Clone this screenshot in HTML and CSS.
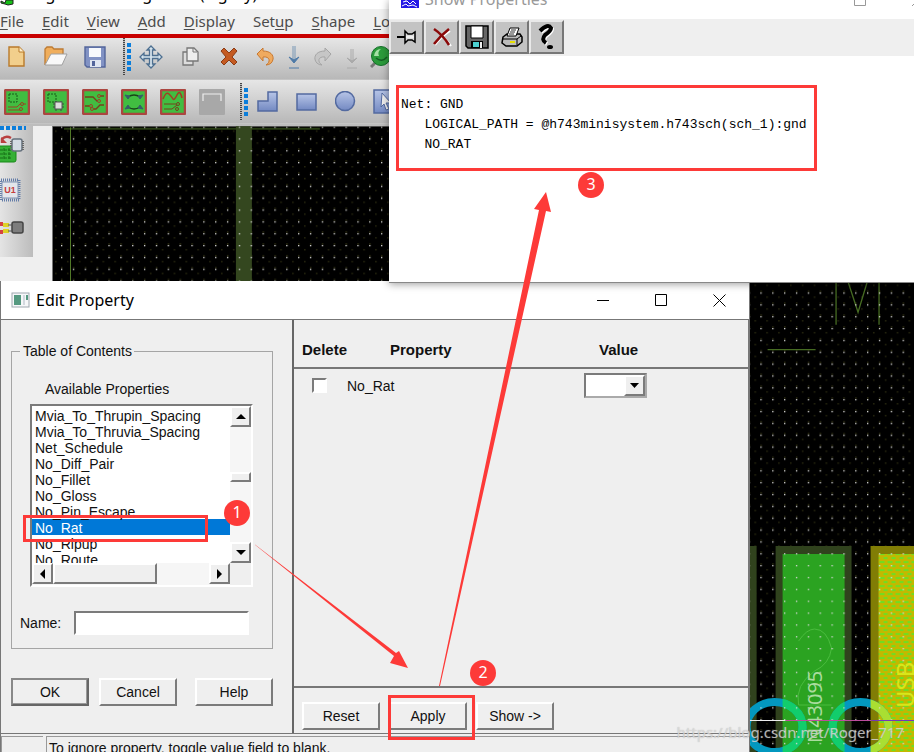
FILE: index.html
```html
<!DOCTYPE html>
<html lang="en">
<head>
<meta charset="utf-8">
<title>Allegro PCB Design GXL (legacy)</title>
<link rel="stylesheet" href="styles.css">
</head>
<body>
<div class="desktop">

<main class="editor">
  <header class="editor-title">
    <svg width="14" height="6" viewBox="0 0 14 6"><path d="M1 1l4 2 1-3h7v4l-5 1-3-1-4-1z" fill="#16c016" stroke="#222"/></svg>
    <span>Allegro PCB Design GXL (legacy)</span>
  </header>
  <nav class="menu">
    <a href="#"><u>F</u>ile</a><a href="#"><u>E</u>dit</a><a href="#"><u>V</u>iew</a><a href="#"><u>A</u>dd</a><a href="#"><u>D</u>isplay</a><a href="#">Set<u>u</u>p</a><a href="#"><u>S</u>hape</a><a href="#"><u>L</u>ogic</a>
  </nav>

  <div class="toolbar toolbar-first">
    <button class="tool" aria-label="New"><svg width="20" height="22" viewBox="0 0 20 22"><path d="M2 1h10l5 5v14H2z" fill="#f2cf8c" stroke="#b97a2b" stroke-width="1.4"/><path d="M12 1v5h5" fill="#fff0cc" stroke="#b97a2b"/></svg></button>
    <button class="tool" aria-label="Open"><svg width="26" height="22" viewBox="0 0 26 22"><path d="M2 19V3l2-2h5l2 2h9v6" fill="#f0ae5c" stroke="#bd7b33" stroke-width="1.3"/><path d="M2 19L8 8h16l-5 11z" fill="#f8f8f8" stroke="#a0a0a0"/></svg></button>
    <button class="tool" aria-label="Save"><svg width="22" height="22" viewBox="0 0 22 22"><path d="M1 1h20v20H3l-2-2z" fill="#8192c4" stroke="#53659b" stroke-width="1.4"/><path d="M5 2h12v9H5z" fill="#f6f8fc"/><path d="M6 14h11v7H6z" fill="#dfe5f1"/><path d="M8 15h3v5H8z" fill="#53659b"/></svg></button>
    <span class="grip"><i></i></span>
    <button class="tool" aria-label="Move"><svg width="24" height="24" viewBox="0 0 24 24"><path d="M12 1l4 4h-2.500v5.500H19V8l4 4-4 4v-2.500h-5.500V19H16l-4 4-4-4h2.500v-5.500H5V16l-4-4 4-4v2.500h5.500V5H8z" fill="#d6e4ee" stroke="#4d6f90" stroke-width="1.3"/></svg></button>
    <button class="tool" aria-label="Copy"><svg width="18" height="22" viewBox="0 0 18 22"><path d="M2 6h10v13H2z" fill="#ddd" stroke="#777" stroke-width="1.3"/><path d="M6 2h7l4 4v9H6z" fill="#eee" stroke="#777" stroke-width="1.3"/><path d="M12 2v4h4" fill="none" stroke="#777"/></svg></button>
    <button class="tool" aria-label="Delete"><svg width="20" height="20" viewBox="0 0 20 20"><path d="M2 4l3-3 5 5 5-5 3 3-5 6 5 5-3 3-5-5-5 5-3-3 5-5z" fill="#c45a21" stroke="#8b3b14"/></svg></button>
    <button class="tool tool-narrow tool-after" aria-label="Undo"><svg width="18" height="20" viewBox="0 0 18 20"><path d="M1 7l6-6v3c14 0 12 14 3 14 5-3 4-9-3-8v4z" fill="#efaa5f" stroke="#c87830"/></svg></button>
    <button class="tool tool-narrow" aria-label="Undo list"><svg width="14" height="24" viewBox="0 0 14 24"><path d="M6 1v15M8 1v15" stroke="#7897b5"/><path d="M2 12l5 6 5-6-5 3z" fill="#4f7ba8" stroke="#4f7ba8"/><path d="M2 23h10" stroke="#4f7ba8"/></svg></button>
    <button class="tool tool-narrow" aria-label="Redo"><svg width="18" height="20" viewBox="0 0 18 20"><path d="M17 7l-6-6v3C-3 4-1 18 8 18c-5-3-4-9 3-8v4z" fill="#c6c6c6" stroke="#a5a5a5"/></svg></button>
    <button class="tool tool-narrow" aria-label="Redo list"><svg width="14" height="24" viewBox="0 0 14 24"><path d="M6 4v13M8 4v13" stroke="#aaa"/><path d="M2 13l5 5 5-5-5 3z" fill="#aaa" stroke="#aaa"/><path d="M2 23h10" stroke="#aaa"/></svg></button>
    <button class="tool tool-narrow" aria-label="Fix"><svg width="22" height="22" viewBox="0 0 22 22"><path d="M6 16l-5 5" stroke="#777" stroke-width="3"/><circle cx="11" cy="10" r="9.500" fill="#2b9b3b" stroke="#15702a"/><path d="M4 10Q5 3 11 3q-4 3-2 7z" fill="#a5e0a5"/><path d="M6 12q6 5 11-1" stroke="#165f25" stroke-width="1.500" fill="none"/></svg></button>
  </div>

  <div class="toolbar">
    <button class="tool" aria-label="General edit"><svg width="26" height="26" viewBox="0 0 26 26"><rect x="1" y="1" width="24" height="24" rx="1" fill="#41bd41" stroke="#ab4640" stroke-width="2.500"/><rect x="5" y="5" width="8" height="8" fill="none" stroke="#185818" stroke-dasharray="2 1"/><path d="M4 18h9l3-3h6M4 21h13" fill="none" stroke="#9b4224"/><circle cx="18" cy="15" r="1.500" fill="#41bd41" stroke="#9b4224"/><circle cx="17" cy="20" r="1.500" fill="#41bd41" stroke="#9b4224"/></svg></button>
    <button class="tool" aria-label="Placement edit"><svg width="26" height="26" viewBox="0 0 26 26"><rect x="1" y="1" width="24" height="24" rx="1" fill="#41bd41" stroke="#ab4640" stroke-width="2.500"/><rect x="5" y="5" width="8" height="8" fill="none" stroke="#185818" stroke-dasharray="2 1"/><path d="M10 15h11M10 18h11M13 12v10M18 12v10" stroke="#444"/><rect x="12" y="13" width="7" height="7" fill="#ddd" stroke="#555"/></svg></button>
    <button class="tool" aria-label="Etch edit"><svg width="26" height="26" viewBox="0 0 26 26"><rect x="1" y="1" width="24" height="24" rx="1" fill="#41bd41" stroke="#ab4640" stroke-width="2.500"/><path d="M3 8h8l4 4h3M22 7h-4M3 17h4M22 16h-4l-4 4h-3" fill="none" stroke="#74421d" stroke-width="1.300"/><g fill="#41bd41" stroke="#9b4224"><circle cx="17" cy="7" r="1.500"/><circle cx="17" cy="12" r="1.500"/><circle cx="9" cy="17" r="1.500"/><circle cx="10" cy="20" r="1.500"/></g></svg></button>
    <button class="tool" aria-label="Flow planning"><svg width="26" height="26" viewBox="0 0 26 26"><rect x="1" y="1" width="24" height="24" rx="1" fill="#41bd41" stroke="#ab4640" stroke-width="2.500"/><path d="M7 8q6-4 12 0M7 18q6 4 12 0" fill="none" stroke="#174517" stroke-width="1.500"/><path d="M4 6l5 1-2 3zM22 6l-5 1 2 3zM4 20l5-1-2-3zM22 20l-5-1 2-3z" fill="#365f67" stroke="#365f67"/></svg></button>
    <button class="tool" aria-label="Signal integrity"><svg width="26" height="26" viewBox="0 0 26 26"><rect x="1" y="1" width="24" height="24" rx="1" fill="#41bd41" stroke="#ab4640" stroke-width="2.500"/><path d="M3 10q3-8 6-5t4 5 4-4 5 3" fill="none" stroke="#a23f25" stroke-width="1.500"/><path d="M4 15h12M4 20h8l5-4" fill="none" stroke="#74421d"/><circle cx="18" cy="15" r="1.500" fill="#41bd41" stroke="#74421d"/><circle cx="17" cy="20" r="1.500" fill="#41bd41" stroke="#74421d"/></svg></button>
    <button class="tool" aria-label="Unavailable mode"><svg width="26" height="26" viewBox="0 0 26 26"><rect width="26" height="26" rx="1" fill="#a8a8a8"/><path d="M4 12V5h18v7" fill="none" stroke="#eee" stroke-width="1.200"/></svg></button>
    <span class="grip"><i></i></span>
    <button class="tool" aria-label="Add shape"><svg width="22" height="22" viewBox="0 0 22 22"><path d="M11 1h9v19H1V10h10z" fill="url(#blue)" stroke="#536aa0" stroke-width="1.500"/></svg></button>
    <button class="tool" aria-label="Add rectangle"><svg width="22" height="20" viewBox="0 0 22 20"><rect x="1" y="2" width="19" height="16" fill="url(#blue)" stroke="#536aa0" stroke-width="1.500"/></svg></button>
    <button class="tool" aria-label="Add circle"><svg width="22" height="22" viewBox="0 0 22 22"><circle cx="10" cy="10" r="9.500" fill="url(#blue)" stroke="#536aa0" stroke-width="1.500"/></svg></button>
    <button class="tool" aria-label="Select shape"><svg width="24" height="26" viewBox="0 0 24 26"><rect x="1" y="1" width="24" height="23" fill="url(#blue)" stroke="#536aa0" stroke-width="1.500"/><path d="M9 4l9 10h-5l3 6-3 1-2-6-3 3z" fill="#eee" stroke="#536aa0"/></svg></button>
  </div>

  <div class="work">
    <aside class="side">
      <svg width="33" height="130" viewBox="0 0 33 130">
        <path d="M0 2h26" stroke="#0b7edb" stroke-width="4" stroke-dasharray="4 2"/>
        <rect x="-4" y="20" width="20" height="16" rx="2" fill="#35b035" stroke="#198a19"/>
        <path d="M0 24h12M0 28h12M0 32h12M4 22v12M9 22v12" stroke="#166f16" stroke-dasharray="3 1"/>
        <path d="M2 17v-4q4-4 9-1" fill="none" stroke="#b94040" stroke-width="2.500"/><path d="M1 11v6h6z" fill="#b94040"/>
        <rect x="12" y="13" width="10" height="12" rx="2" fill="#d3dbe3" stroke="#66717d" stroke-width="1.500"/><path d="M11 15v9M23 15v9" stroke="#666" stroke-width="2" stroke-dasharray="1 1"/>
        <rect x="1" y="54" width="18" height="20" fill="none" stroke="#637ca8" stroke-width="3" stroke-dasharray="1 1"/><rect x="2" y="56" width="16" height="16" fill="#e3e6ec" stroke="#7f93b4"/>
        <text x="10" y="67" text-anchor="middle" class="chip-text">U1</text>
        <path d="M0 98h3M0 106h3" stroke="#d54242" stroke-width="4"/><path d="M3 99h6M3 105h6" stroke="#ded127" stroke-width="4"/>
        <rect x="12" y="96" width="11" height="11" rx="2" fill="#7d7d7d" stroke="#444" stroke-width="1.500"/><path d="M8 99h4M8 105h4" stroke="#555"/>
      </svg>
    </aside>
    <svg class="board" width="1800" height="1200" viewBox="53 126 1800 1200">
      <defs>
        <linearGradient id="blue" x2="0" y2="1"><stop offset="0" stop-color="#b7c5e7"/><stop offset="1" stop-color="#7389c2"/></linearGradient>
        <pattern id="dim" x="61" y="138" width="11.860" height="11.860" patternUnits="userSpaceOnUse"><path d="M6 4h1.500v1.500H6zM0 10h1.500v1.500H0z" fill="#27270f"/></pattern>
        <pattern id="dots" x="61" y="138" width="11.860" height="11.860" patternUnits="userSpaceOnUse"><rect width="1.300" height="1.300" fill="#d8d8d8"/></pattern>
        <pattern id="weave" width="8" height="8" patternUnits="userSpaceOnUse"><rect width="8" height="8" fill="#c2b900"/><path d="M0 1h5v2H0zM4 5h4v2H4z" fill="#70dd22"/></pattern>
      </defs>
      <rect x="53" y="126" width="1800" height="1200" fill="#000"/>
      <rect x="53" y="126" width="1800" height="1200" fill="url(#dim)"/>
      <path d="M64 128.500h256" stroke="#263b12" stroke-width="2"/>
      <path d="M70.500 127v160" stroke="#527a28"/>
      <path d="M236 126h16v160h-16z" fill="#34471f"/>
      <path d="M836.500 270v54.500M879.500 270v54.500M846 274l12.500 38L870 274M768 349.500h48" stroke="#466b22" fill="none" stroke-width="1.300"/>
      <path d="M740 546h17v300h-17zM776 546h76v300h-76z" fill="#30421d"/>
      <path d="M783 554h62v300h-62z" fill="#2ba321"/>
      <path d="M871 546h80v300h-80z" fill="#817d05"/>
      <path d="M879 554h80v300h-80z" fill="url(#weave)"/>
      <path d="M799 641q8-12 16-12 12 0 17 19-2 16-17 23-20 14-16 34h33" fill="none" stroke="#4abc3e"/>
      <g fill="none" stroke-width="8"><ellipse cx="775" cy="727" rx="28" ry="25" stroke="#0398bf"/><ellipse cx="861" cy="727" rx="28" ry="25" stroke="#0398bf"/></g>
      <clipPath id="pad"><path d="M783 554h62v300h-62z"/></clipPath>
      <clipPath id="pad2"><path d="M871 554h80v300h-80z"/></clipPath>
      <g clip-path="url(#pad)" fill="none" stroke="#12cd6c" stroke-width="8"><ellipse cx="775" cy="727" rx="28" ry="25"/><ellipse cx="861" cy="727" rx="28" ry="25"/></g>
      <ellipse cx="861" cy="727" rx="28" ry="25" clip-path="url(#pad2)" fill="none" stroke="#a9df32" stroke-width="8"/>
      <rect x="53" y="126" width="1800" height="1200" fill="url(#dots)"/>
      <text class="net-name" transform="translate(822 743) rotate(-90)">N43095</text>
      <text class="net-name net-usb" transform="translate(914 708) rotate(-90)">USB_</text>
      <path d="M750 720.500h36" stroke="#eee"/><path d="M786 720.500h86" stroke="#bd4c9e"/><path d="M872 720.500h80" stroke="#7238b8"/>
    </svg>
  </div>
</main>

<section class="window edit">
  <header class="edit-title">
    <svg width="19" height="16" viewBox="0 0 19 16"><rect x="1" y="1" width="17" height="14" fill="#f6f7f9" stroke="#a0a8b0"/><path d="M3 3h7v10H3z" fill="#559980"/><path d="M12 3h2v10h-2z" fill="#d3d9df"/><path d="M15 3h2v5h-2z" fill="#559980"/></svg>
    <h1>Edit Property</h1>
    <div class="caption">
      <button aria-label="Minimize"><svg width="13" height="13"><path d="M0 6.500h12" stroke="#000"/></svg></button>
      <button aria-label="Maximize"><svg width="13" height="13"><path d="M.5.5h11v11H.5z" fill="none" stroke="#000"/></svg></button>
      <button aria-label="Close"><svg width="13" height="13"><path d="M.5.5l12 12M12.500.5l-12 12" stroke="#000"/></svg></button>
    </div>
  </header>
  <div class="panes">
    <div class="left-pane">
      <fieldset>
        <legend>Table of Contents</legend>
        <label class="list-label" for="props">Available Properties</label>
        <div class="listbox">
          <select id="props" size="10">
            <option>Mvia_To_Thrupin_Spacing</option><option>Mvia_To_Thruvia_Spacing</option><option>Net_Schedule</option><option>No_Diff_Pair</option><option>No_Fillet</option><option>No_Gloss</option><option>No_Pin_Escape</option><option selected>No_Rat</option><option>No_Ripup</option><option>No_Route</option>
          </select>
          <div class="vbar">
            <button class="bar-btn" aria-label="Scroll up"><svg width="10" height="5"><path d="M0 5l5-5 5 5z"/></svg></button>
            <span class="vthumb"></span>
            <button class="bar-btn" aria-label="Scroll down"><svg width="10" height="5"><path d="M0 0l5 5 5-5z"/></svg></button>
          </div>
          <div class="hbar">
            <button class="bar-btn" aria-label="Scroll left"><svg width="5" height="10"><path d="M5 0L0 5l5 5z"/></svg></button>
            <span class="hthumb"></span>
            <button class="bar-btn" aria-label="Scroll right"><svg width="5" height="10"><path d="M0 0l5 5-5 5z"/></svg></button>
          </div>
        </div>
        <div class="name-row"><label for="name">Name:</label><input id="name" type="text"></div>
      </fieldset>
      <div class="left-buttons"><button class="btn btn-default">OK</button><button class="btn">Cancel</button><button class="btn btn-help">Help</button></div>
    </div>
    <div class="right-pane">
      <table>
        <thead><tr><th class="col-delete">Delete</th><th class="col-property">Property</th><th class="col-value">Value</th></tr></thead>
        <tbody><tr>
          <td class="cell-check"><input type="checkbox" id="del" aria-label="Delete No_Rat"></td>
          <td><label for="del">No_Rat</label></td>
          <td><span class="combo"><select aria-label="Value"><option></option></select><span class="combo-arrow"><svg width="9" height="5"><path d="M0 0h9L4.500 5z"/></svg></span></span></td>
        </tr></tbody>
      </table>
      <div class="right-buttons"><button class="btn">Reset</button><button class="btn btn-apply">Apply</button><button class="btn">Show -&gt;</button></div>
    </div>
  </div>
  <footer class="status"><span class="status-small"></span><span class="status-text">To ignore property, toggle value field to blank.</span></footer>
</section>

<section class="window show">
  <header class="show-title">
    <svg width="18" height="16" viewBox="0 0 18 16"><rect width="18" height="16" fill="#2418e6"/><path d="M1 14l4-2 2 2 5-1 4 2M2 10l4-1 3 3 3-3 3 3M4 8l5-1" stroke="#fff" fill="none"/></svg>
    <h2>Show Properties</h2>
    <div class="caption caption-show">
      <button aria-label="Maximize"><svg width="12" height="12"><path d="M.5.5h11v11H.5z" fill="none" stroke="#999"/></svg></button>
      <button aria-label="Close"><svg width="12" height="12"><path d="M0 12L12 0M0 0l12 12" stroke="#999"/></svg></button>
    </div>
  </header>
  <div class="show-tools">
    <button aria-label="Pin"><svg width="22" height="16" viewBox="0 0 22 16"><path d="M1 8h8" stroke="#000" stroke-width="2"/><path d="M9 2v12l3-3h4l3 2V3l-3 2h-4z" fill="#ddd" stroke="#000" stroke-width="1.500"/><path d="M10 8h8" stroke="#fff"/></svg></button>
    <button aria-label="Close report"><svg width="20" height="20" viewBox="0 0 20 20"><path d="M2 2q9 6 16 16M17 3Q8 9 2 17" fill="none" stroke="#fff" stroke-width="2" transform="translate(1 1)"/><path d="M2 2q9 6 15 16M17 2Q8 9 2 17" fill="none" stroke="#8a0909" stroke-width="2.500"/></svg></button>
    <button aria-label="Save report"><svg width="24" height="24" viewBox="0 0 24 24"><path d="M1 1h22v22H3l-2-2z" fill="#666" stroke="#000" stroke-width="1.500"/><path d="M6 1h12v12H6z" fill="#fff" stroke="#000"/><path d="M6 16h12v7H6z" fill="#000"/><path d="M8 17h6v5H8z" fill="#4bd0d0"/><path d="M15 17h2v6h-2z" fill="#eee"/></svg></button>
    <button aria-label="Print"><svg width="22" height="20" viewBox="0 0 22 20"><path d="M2 10l4-3h13l2 3v5l-5 4H5l-4-3z" fill="#bbb" stroke="#000" stroke-width="1.500"/><path d="M6 9l3-8h9l-3 8z" fill="#fff" stroke="#000"/><path d="M10 3h5M9 5h5M8 7h5" stroke="#333"/><path d="M2 12h14l4-3M16 12v6" fill="none" stroke="#000"/><path d="M9 14h5v2H9z" fill="#e7e000"/></svg></button>
    <button aria-label="Help"><svg width="20" height="26" viewBox="0 0 20 26"><path d="M3 7Q11-1 14 4q0 3-6 7-4 5 1 8" fill="none" stroke="#fff" stroke-width="4" transform="translate(1 1)"/><path d="M3 7Q11-1 14 4q0 3-6 7-4 5 1 8" fill="none" stroke="#000" stroke-width="4"/><ellipse cx="13" cy="23" rx="3" ry="2"/></svg></button>
  </div>
  <pre>Net: GND
   LOGICAL_PATH = @h743minisystem.h743sch(sch_1):gnd
   NO_RAT</pre>
</section>

<svg class="notes" width="914" height="752" viewBox="0 0 914 752">
  <g fill="none" stroke="#fd3a38" stroke-width="3"><rect x="24.500" y="516.500" width="182" height="24"/><rect x="389.500" y="696.500" width="84" height="42"/><rect x="397.500" y="86.500" width="418" height="83"/></g>
  <g fill="#fd3a38">
    <path d="M249 540L394 656l-4 7 18 5-9-17-3 2z"/>
    <path d="M439 686L539 210l-5-1 12-17 5 20-5-1L440 686z"/>
    <circle cx="237" cy="513" r="13"/><circle cx="483" cy="673" r="13"/><circle cx="591" cy="185" r="13"/>
  </g>
  <g class="note-text" text-anchor="middle"><text x="237" y="518">1</text><text x="483" y="678">2</text><text x="591" y="190">3</text></g>
</svg>
<p class="watermark">https://blog.csdn.net/Roger_717</p>
</div>
</body>
</html>
```
FILE: styles.css
```css
* { box-sizing: border-box; }
body { margin: 0; font: 14px/16px "Liberation Sans", Arial, sans-serif; color: #111; }
button, input, select { font: inherit; color: inherit; margin: 0; padding: 0; border-radius: 0; }
button { border: 0; background: none; display: flex; align-items: center; justify-content: center; }
svg { display: block; flex: none; }
h1, h2 { margin: 0; font: 16px/20px "Noto Sans", "Open Sans", sans-serif; }

.desktop { position: relative; height: 100vh; min-height: 600px; overflow: hidden; background: #efefef; }

/* Board editor behind the dialogs */
.editor { display: flex; flex-direction: column; height: 100%; overflow: hidden; }
.editor-title { display: flex; align-items: flex-start; height: 9px; flex: none; overflow: hidden; background: #fff; font: 16px/20px "Noto Sans", sans-serif; gap: 4px; color: #000; white-space: nowrap; }
.editor-title span { margin-top: -16px; }
.menu { display: flex; gap: 18px; height: 29px; flex: none; border-bottom: 4px solid #c80000; background: #f0f0f0; font: 15px/24px "Noto Sans", "Open Sans", sans-serif; }
.menu a { color: #4c4c4c; text-decoration: none; }
.menu u { text-underline-offset: 2px; }
.toolbar { display: flex; align-items: center; height: 44px; flex: none; background: linear-gradient(#e6e6e6, #b8b8b8); border-bottom: 1px solid #c4c4c4; }
.toolbar-first { height: 42px; padding-bottom: 4px; }
.toolbar .tool:first-child { margin-left: -3px; }
.tool { width: 39px; height: 40px; flex: none; }
.tool-narrow { width: 29px; }
.tool-after { margin-left: 2px; }
.grip { width: 17px; height: 38px; flex: none; padding: 5px 0 0 4px; background: repeating-linear-gradient(#444 0 1px, #bbb 1px 2px) 9px 0 / 2px 100% no-repeat; display: flex; justify-content: flex-end; }
.grip i { width: 4px; height: 28px; background: repeating-linear-gradient(#0b7edb 0 4px, transparent 4px 6px); }
.work { display: flex; flex: 1; min-height: 0; border-top: 2px solid #bdbdbd; }
.side { width: 33px; height: 131px; flex: none; margin-right: 19px; background: linear-gradient(90deg, #e4e4e4, #bcbcbc); }
.board { border-left: 1px solid #777; }
.chip-text { font: bold 9px "Liberation Sans", sans-serif; fill: #c53e3e; }
.net-name { font: 20px "Noto Sans", sans-serif; fill: #a9dc9e; }
.net-usb { font-size: 24px; fill: #d9e619; }

/* Dialog windows */
.window { position: absolute; display: flex; flex-direction: column; }
.edit { left: 0; right: 164px; top: 281px; bottom: 0; background: #efefef; border-left: 1px solid #777; border-right: 1px solid #777; }
.edit-title { display: flex; align-items: center; height: 38px; flex: none; padding-left: 10px; gap: 6px; background: #fff; }
.edit-title h1 { color: #000; }
.caption { display: flex; margin-left: auto; }
.caption button { width: 58px; height: 30px; }
.edit .caption { margin-right: 1px; }
.panes { display: flex; flex: 1; min-height: 0; border: solid #777; border-width: 1px 1px 1px 0; }
.left-pane { width: 291px; flex: none; padding: 23px 19px 0 10px; }
fieldset { margin: 0; height: 306px; padding: 0 19px 0 18px; border: 1px solid #a5a5a5; min-width: 0; }
legend { margin-left: -10px; padding: 0 2px 0 3px; }
.list-label { display: block; margin: 22px 0 7px 15px; }
.listbox { display: grid; grid-template-columns: 1fr 21px; grid-template-rows: 157px 22px; border: 2px solid; border-color: #7b7b7b #fff #fff #7b7b7b; }
.listbox select { appearance: none; width: 100%; height: 157px; padding-top: 1px; border: 0; outline: 0; background: #fff; overflow: hidden; scrollbar-width: none; }
.listbox option { height: 16px; min-height: 16px; padding: 1px 3px 0; line-height: 16px; color: #111; }
.listbox option:checked { background: #0078d7 linear-gradient(#0078d7, #0078d7); color: #fff; -webkit-text-fill-color: #fff; }
.vbar, .hbar { display: flex; background: #f6f6f6; }
.vbar { flex-direction: column; }
.hbar { grid-column: 1; }
.bar-btn, .vthumb, .hthumb, .btn, .combo-arrow { background: #efefef; border: 2px solid; border-color: #fff #7b7b7b #7b7b7b #fff; }
.bar-btn { width: 21px; height: 21px; flex: none; }
.vthumb { width: 21px; height: 10px; margin: 45px 0 auto; }
.hthumb { width: 104px; height: 21px; margin-right: auto; }
.name-row { display: flex; align-items: center; margin: 24px 0 0 -10px; gap: 13px; padding-right: 4px; }
.name-row input { flex: 1; min-width: 0; height: 24px; border: 2px solid; border-color: #7b7b7b #fff #fff #7b7b7b; background: #fff; }
.left-buttons { display: flex; gap: 10px; margin-top: 29px; }
.btn { width: 78px; height: 28px; flex: none; }
.btn-default { border-color: #888 #666 #666 #888; box-shadow: inset -1px -1px #999; }
.btn-help { margin-left: 8px; }
.right-pane { flex: 1; min-width: 0; display: flex; flex-direction: column; border-left: 2px solid #666; }
table { border-collapse: collapse; width: 100%; table-layout: fixed; text-align: left; }
th { height: 48px; padding: 12px 0 0; border-bottom: 2px solid #777; overflow: visible; white-space: nowrap; font-size: 15px; }
th.col-delete { width: 53px; padding-left: 8px; }
th.col-property { width: 237px; padding-left: 43px; }
th.col-value { padding-left: 15px; }
td { height: 34px; padding: 0; }
.cell-check { padding-left: 18px; }
.cell-check input { appearance: none; display: block; width: 15px; height: 15px; background: #fff; border: 2px solid; border-color: #7b7b7b #fff #fff #7b7b7b; }
.combo { display: flex; width: 63px; height: 25px; border: 2px solid; border-color: #7b7b7b #aaa #aaa #7b7b7b; background: #fff; }
.combo select { appearance: none; border: 0; background: #fff; flex: 1; min-width: 0; }
.combo-arrow { width: 21px; display: flex; align-items: center; justify-content: center; }
.right-buttons { display: flex; gap: 9px; padding: 14px 8px 3px; margin-top: auto; border-top: 2px solid #777; }
.status { display: flex; gap: 3px; height: 18px; flex: none; padding-top: 2px; overflow: hidden; }
.status span { border: solid #999; border-width: 1px 0 0 1px; }
.status-small { width: 42px; }
.status-text { flex: 1; padding: 3px 0 0 2px; white-space: nowrap; }

.show { left: 389px; right: 0; top: 0; height: 283px; background: #fff; box-shadow: 0 1px 8px #0006; border-bottom: 1px solid #888; }
.show-title { display: flex; align-items: flex-start; height: 19px; flex: none; padding-left: 12px; gap: 6px; overflow: hidden; }
.show-title svg { margin-top: -8px; }
.show-title h2 { margin-top: -11px; color: #999; }
.caption-show { margin-right: -33px; }
.caption-show button { height: 16px; align-items: flex-start; }
.caption-show svg { margin-top: -6px; }
.show-tools { display: flex; height: 37px; flex: none; padding-top: 1px; background: #efefef; }
.show-tools button { width: 35px; height: 34px; background: #c3c3c3; border: 2px solid; border-color: #e9e9e9 #777 #777 #e9e9e9; }
pre { margin: 39px 0 0 12px; font: 13px/20px "Liberation Mono", monospace; color: #000; }

/* Callouts over the windows */
.notes { position: absolute; left: 0; top: 0; pointer-events: none; }
.note-text { font: 16px "Noto Sans", sans-serif; fill: #fff; }
.watermark { position: absolute; right: 10px; bottom: 10px; margin: 0; font: 15px/20px "Noto Sans", sans-serif; color: #e6e6e6b0; text-shadow: 0 0 1px #8889; }
```
